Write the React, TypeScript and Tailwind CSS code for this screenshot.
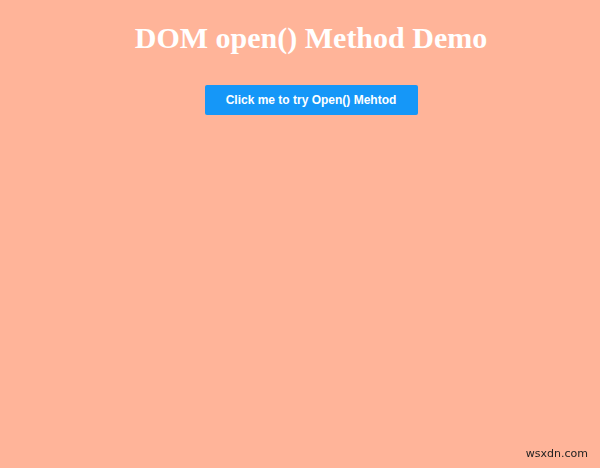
export default function App() {
  return (
    <div className="min-h-[468px] w-full bg-[#ffb499] pl-[22px] text-center">
      <h1 className="pt-[20px] text-[30px] font-bold leading-[35px] text-white [font-family:'Liberation_Serif',serif]">
        DOM open() Method Demo
      </h1>
      <div className="mt-[30px] flex justify-center">
        <button className="h-[30px] w-[213px] rounded-[2px] bg-[#1597f8] text-[12px] font-bold text-white [font-family:'Liberation_Sans',Arial,sans-serif]">
          Click me to try Open() Mehtod
        </button>
      </div>
      <div className="fixed bottom-[6px] right-[12px] text-[11px] text-[#222] [font-family:'DejaVu_Sans',sans-serif]">
        wsxdn.com
      </div>
    </div>
  );
}
